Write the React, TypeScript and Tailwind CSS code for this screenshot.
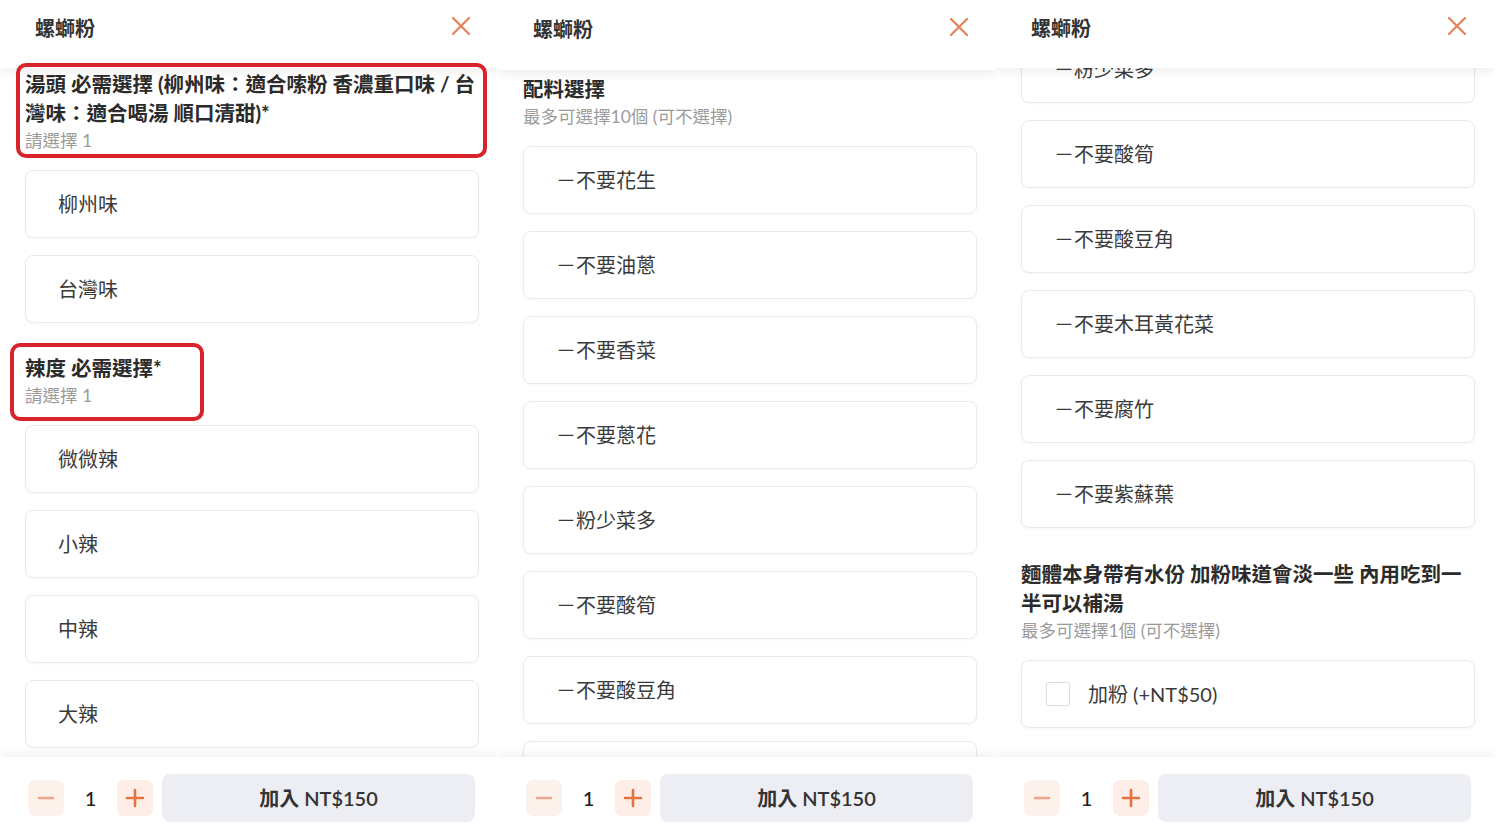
import React from "react";

const FONT = "font-['Lato','Noto_Sans_CJK_TC','Noto_Sans_CJK_SC',sans-serif]";

function Card({ children }: { children: React.ReactNode }) {
  return (
    <div className="flex h-[68px] items-center rounded-[8px] border border-[#ebebeb] bg-white pl-[32px] text-[20px] text-[#3a3a3a] shadow-[0_1px_3px_rgba(0,0,0,0.04)]">
      {children}
    </div>
  );
}

function Section({
  title,
  sub,
  items,
  className = "",
  checkbox = false,
}: {
  title: string;
  sub: string;
  items: string[];
  className?: string;
  checkbox?: boolean;
}) {
  return (
    <section className={className}>
      <h3 className="text-[20.5px] font-bold leading-[29px] text-[#2b2b2b]">{title}</h3>
      <p className="text-[17.5px] leading-[26px] text-[#9b9b9b]">{sub}</p>
      <div className="mt-[16px] flex flex-col gap-[17px]">
        {items.map((t) => (
          <Card key={t}>
            {checkbox ? (
              <div className="-ml-[8px] flex items-center gap-[18px]">
                <span className="h-[24px] w-[24px] rounded-[3px] border border-[#dcdcdc] bg-white" />
                <span>{t}</span>
              </div>
            ) : (
              t
            )}
          </Card>
        ))}
      </div>
    </section>
  );
}

function MenuContent() {
  return (
    <div className="pl-[25px] pr-[19px] pt-[2px] pb-[40px]">
      <Section
        title="湯頭 必需選擇 (柳州味：適合嗦粉 香濃重口味 / 台灣味：適合喝湯 順口清甜)*"
        sub="請選擇 1"
        items={["柳州味", "台灣味"]}
      />
      <Section
        className="mt-[31px]"
        title="辣度 必需選擇*"
        sub="請選擇 1"
        items={["微微辣", "小辣", "中辣", "大辣"]}
      />
      <Section
        className="mt-[32px]"
        title="配料選擇"
        sub="最多可選擇10個 (可不選擇)"
        items={[
          "－不要花生",
          "－不要油蔥",
          "－不要香菜",
          "－不要蔥花",
          "－粉少菜多",
          "－不要酸筍",
          "－不要酸豆角",
          "－不要木耳黃花菜",
          "－不要腐竹",
          "－不要紫蘇葉",
        ]}
      />
      <Section
        className="mt-[32px]"
        title="麵體本身帶有水份 加粉味道會淡一些 內用吃到一半可以補湯"
        sub="最多可選擇1個 (可不選擇)"
        items={["加粉 (+NT$50)"]}
        checkbox
      />
    </div>
  );
}

function Header({ tall }: { tall?: boolean }) {
  return (
    <div
      className={`relative z-10 flex shrink-0 items-start justify-between bg-white pl-[35px] pr-[27px] shadow-[0_4px_10px_rgba(0,0,0,0.07)] ${
        tall ? "h-[70px] pt-[15px]" : "h-[68px] pt-[14px]"
      }`}
    >
      <h2 className="text-[20px] font-bold leading-[28px] text-[#333]">螺螄粉</h2>
      <svg width="20" height="28" viewBox="0 0 20 28" className="-mt-[1px]">
        <path d="M2 5L18 21M18 5L2 21" stroke="#e4825a" strokeWidth="2.2" strokeLinecap="round" />
      </svg>
    </div>
  );
}

function Footer() {
  return (
    <div className="relative z-10 flex h-[73px] shrink-0 items-center bg-white pl-[28px] pr-[23px] pt-[9px] shadow-[0_-4px_8px_rgba(0,0,0,0.05)]">
      <button className="flex h-[36px] w-[36px] items-center justify-center rounded-[7px] bg-[#fdf1eb]">
        <svg width="18" height="18" viewBox="0 0 18 18">
          <path d="M2 9H16" stroke="#eba98a" strokeWidth="2.6" strokeLinecap="round" />
        </svg>
      </button>
      <div className="w-[53px] text-center text-[20px] font-medium text-[#222]">1</div>
      <button className="flex h-[36px] w-[36px] items-center justify-center rounded-[7px] bg-[#fdefe8]">
        <svg width="20" height="20" viewBox="0 0 20 20">
          <path d="M2 10H18M10 2V18" stroke="#e2743f" strokeWidth="2.6" strokeLinecap="round" />
        </svg>
      </button>
      <button className="ml-[9px] flex h-[48px] flex-1 items-center justify-center rounded-[8px] bg-[#eceef3] text-[20px] font-semibold text-[#333]">
        加入 NT$150
      </button>
    </div>
  );
}

function Panel({
  tall,
  scrollClass,
  children,
}: {
  tall?: boolean;
  scrollClass: string;
  children?: React.ReactNode;
}) {
  return (
    <div className="relative flex h-[830px] w-[498px] shrink-0 flex-col overflow-hidden bg-white">
      <Header tall={tall} />
      <div className="min-h-0 flex-1 overflow-hidden">
        <div className={scrollClass}>
          <MenuContent />
        </div>
      </div>
      <Footer />
      {children}
    </div>
  );
}

export default function App() {
  return (
    <div className={`flex h-[830px] w-[1500px] overflow-hidden bg-white ${FONT}`}>
      <Panel scrollClass="">
        <div className="pointer-events-none absolute left-[16px] top-[63px] z-20 h-[95px] w-[471px] rounded-[10px] border-[4px] border-[#d9232b]" />
        <div className="pointer-events-none absolute left-[10px] top-[343px] z-20 h-[78px] w-[194px] rounded-[10px] border-[4px] border-[#d9232b]" />
      </Panel>
      <Panel tall scrollClass="-mt-[707px]" />
      <Panel scrollClass="-mt-[1156px]" />
    </div>
  );
}
